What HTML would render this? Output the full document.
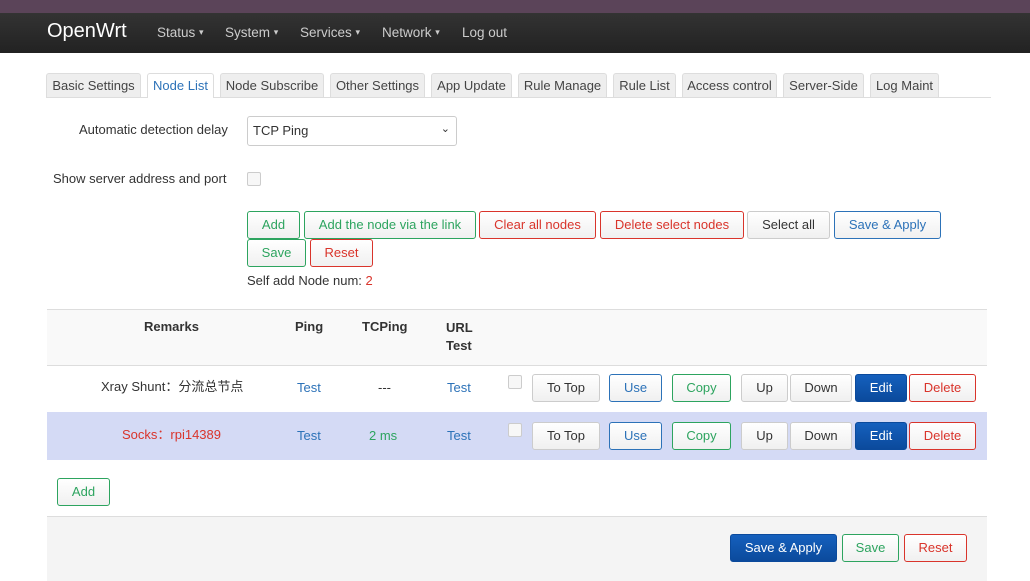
<!DOCTYPE html><html><head><style>
body{margin:0;width:1030px;height:580px;position:relative;overflow:hidden;background:#fff;font-family:"Liberation Sans","Noto Sans CJK SC",sans-serif;font-size:13px;color:#333}
.a{position:absolute}
.t{position:absolute;top:73px;height:24px;background:#eee;border:1px solid #ddd;border-bottom:none;border-radius:3px 3px 0 0;box-sizing:border-box;line-height:23px;text-align:center;color:#444}
.b{position:absolute;box-sizing:border-box;border:1px solid #ccc;border-radius:3px;background:linear-gradient(#fff,#f0f0f0);text-align:center;color:#333;height:28px;line-height:26px}
.g{border-color:#2da45f;color:#2da45f}.r{border-color:#d9342b;color:#d9342b}.bl{border-color:#2c72b8;color:#2c72b8}
.e{background:linear-gradient(#1560bd,#0b4a9c);border-color:#0b4a9c;color:#fff}
.cb{position:absolute;width:12px;height:12px;border:1px solid #ccc;border-radius:2px;background:#f7f7f7}
.n{position:absolute;top:25px;color:#ccc;font-size:13.5px}
.n span{font-size:9px;vertical-align:2px}
</style></head><body>
<div class="a" style="left:0;top:0;width:1030px;height:13px;background:#5b4459"></div>
<div class="a" style="left:0;top:13px;width:1030px;height:40px;background:linear-gradient(#333,#222)"></div>
<div class="a" style="left:47px;top:20px;font-size:20px;color:#fff">OpenWrt</div>
<div class="n" style="left:157px">Status <span>▾</span></div>
<div class="n" style="left:225px">System <span>▾</span></div>
<div class="n" style="left:300px">Services <span>▾</span></div>
<div class="n" style="left:382px">Network <span>▾</span></div>
<div class="n" style="left:462px">Log out</div>
<div class="a" style="left:46px;top:97px;width:945px;height:1px;background:#ddd"></div>
<div class="t" style="left:46px;width:95px">Basic Settings</div>
<div class="t" style="left:147px;width:67px;background:#fff;color:#2c72b8;height:25px">Node List</div>
<div class="t" style="left:220px;width:104px">Node Subscribe</div>
<div class="t" style="left:330px;width:95px">Other Settings</div>
<div class="t" style="left:431px;width:81px">App Update</div>
<div class="t" style="left:518px;width:89px">Rule Manage</div>
<div class="t" style="left:613px;width:63px">Rule List</div>
<div class="t" style="left:682px;width:95px">Access control</div>
<div class="t" style="left:783px;width:81px">Server-Side</div>
<div class="t" style="left:870px;width:69px">Log Maint</div>
<div class="a" style="left:79px;top:122px">Automatic detection delay</div>
<div class="a" style="left:247px;top:116px;width:210px;height:30px;border:1px solid #ccc;border-radius:3px;box-sizing:border-box;padding:6px 5px">TCP Ping<span style="position:absolute;right:6px;top:5px;font-size:11px">⌄</span></div>
<div class="a" style="left:53px;top:171px">Show server address and port</div>
<div class="cb" style="left:247px;top:172px"></div>
<div class="b g" style="left:247px;top:211px;width:53px">Add</div>
<div class="b g" style="left:304px;top:211px;width:172px">Add the node via the link</div>
<div class="b r" style="left:479px;top:211px;width:117px">Clear all nodes</div>
<div class="b r" style="left:600px;top:211px;width:144px">Delete select nodes</div>
<div class="b" style="left:747px;top:211px;width:83px">Select all</div>
<div class="b bl" style="left:834px;top:211px;width:107px">Save &amp; Apply</div>
<div class="b g" style="left:247px;top:239px;width:59px">Save</div>
<div class="b r" style="left:310px;top:239px;width:63px">Reset</div>
<div class="a" style="left:247px;top:273px">Self add Node num: <span style="color:#d9342b">2</span></div>
<div class="a" style="left:47px;top:309px;width:940px;height:55px;background:#f9f9f9;border-top:1px solid #ddd;border-bottom:1px solid #ddd"></div>
<div class="a" style="left:144px;top:319px;font-weight:bold">Remarks</div>
<div class="a" style="left:295px;top:319px;font-weight:bold">Ping</div>
<div class="a" style="left:362px;top:319px;font-weight:bold">TCPing</div>
<div class="a" style="left:446px;top:319px;font-weight:bold;line-height:18px">URL<br>Test</div>
<div class="a" style="left:47px;top:412px;width:940px;height:48px;background:#d4daf5"></div>
<div class="a" style="left:101px;top:379px;line-height:16px">Xray Shunt：分流总节点</div>
<div class="a" style="left:297px;top:380px;color:#2c72b8">Test</div>
<div class="a" style="left:378px;top:380px">---</div>
<div class="a" style="left:447px;top:380px;color:#2c72b8">Test</div>
<div class="a" style="left:122px;top:427px;line-height:16px;color:#d9342b">Socks：rpi14389</div>
<div class="a" style="left:297px;top:428px;color:#2c72b8">Test</div>
<div class="a" style="left:369px;top:428px;color:#2da45f">2 ms</div>
<div class="a" style="left:447px;top:428px;color:#2c72b8">Test</div>
<div class="cb" style="left:508px;top:375px"></div>
<div class="b" style="left:532px;top:374px;width:68px">To Top</div>
<div class="b bl" style="left:609px;top:374px;width:53px">Use</div>
<div class="b g" style="left:672px;top:374px;width:59px">Copy</div>
<div class="b" style="left:741px;top:374px;width:47px">Up</div>
<div class="b" style="left:790px;top:374px;width:62px">Down</div>
<div class="b e" style="left:855px;top:374px;width:52px">Edit</div>
<div class="b r" style="left:909px;top:374px;width:67px">Delete</div>
<div class="cb" style="left:508px;top:423px"></div>
<div class="b" style="left:532px;top:422px;width:68px">To Top</div>
<div class="b bl" style="left:609px;top:422px;width:53px">Use</div>
<div class="b g" style="left:672px;top:422px;width:59px">Copy</div>
<div class="b" style="left:741px;top:422px;width:47px">Up</div>
<div class="b" style="left:790px;top:422px;width:62px">Down</div>
<div class="b e" style="left:855px;top:422px;width:52px">Edit</div>
<div class="b r" style="left:909px;top:422px;width:67px">Delete</div>
<div class="b g" style="left:57px;top:478px;width:53px">Add</div>
<div class="a" style="left:47px;top:516px;width:940px;height:64px;background:#f4f4f4;border-top:1px solid #ddd"></div>
<div class="b e" style="left:730px;top:534px;width:107px">Save &amp; Apply</div>
<div class="b g" style="left:842px;top:534px;width:57px">Save</div>
<div class="b r" style="left:904px;top:534px;width:63px">Reset</div>
</body></html>
